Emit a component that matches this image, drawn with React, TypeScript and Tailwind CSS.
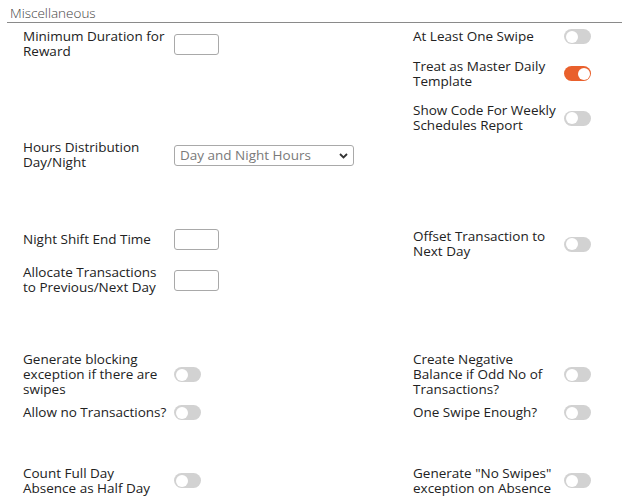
import React from "react";

const FONT = { fontFamily: '"Open Sans", "Liberation Sans", sans-serif' };

function Label({ lines }: { lines: string[] }) {
  return (
    <div className="w-[151px] shrink-0 leading-[15px]">
      {lines.map((l, i) => (
        <div key={i} className="whitespace-nowrap">
          {l}
        </div>
      ))}
    </div>
  );
}

function Toggle({ on = false }: { on?: boolean }) {
  return (
    <div
      className={`relative w-[27px] h-[15px] rounded-full shrink-0 ${
        on ? "bg-[#e9602c]" : "bg-[#d2d2d2]"
      }`}
    >
      <div
        className={`absolute top-[1.5px] w-[12px] h-[12px] rounded-full bg-white ${
          on ? "right-[1.5px]" : "left-[1.5px]"
        }`}
      />
    </div>
  );
}

function TextBox() {
  return (
    <input
      type="text"
      className="w-[45px] h-[21px] border border-[#a9a9a9] rounded-[3px] bg-white outline-none"
    />
  );
}

function Row({
  lines,
  children,
  className = "",
}: {
  lines: string[];
  children: React.ReactNode;
  className?: string;
}) {
  return (
    <div className={`flex items-center ${className}`}>
      <Label lines={lines} />
      {children}
    </div>
  );
}

export default function App() {
  return (
    <div
      className="w-[622px] h-[502px] bg-white overflow-hidden text-[13.5px] text-[#222]"
      style={FONT}
    >
      <div className="ml-[7px] h-[23px] border-b border-[#8a8a8a] pl-[3px] pt-[6px] leading-[15px] font-light text-[#444]">
        Miscellaneous
      </div>

      <div className="pl-[23px] font-medium">
        {/* Section 1 */}
        <div className="grid grid-cols-[390px_1fr] mt-[6px]">
          <div className="flex flex-col">
            <Row lines={["Minimum Duration for", "Reward"]}>
              <TextBox />
            </Row>
          </div>
          <div className="flex flex-col">
            <Row lines={["At Least One Swipe"]}>
              <Toggle />
            </Row>
            <Row lines={["Treat as Master Daily", "Template"]} className="mt-[14.5px]">
              <Toggle on />
            </Row>
            <Row lines={["Show Code For Weekly", "Schedules Report"]} className="mt-[14.5px]">
              <Toggle />
            </Row>
          </div>
        </div>

        {/* Section 2 */}
        <div className="grid grid-cols-[390px_1fr] mt-[7px]">
          <div className="flex flex-col">
            <Row lines={["Hours Distribution", "Day/Night"]}>
              <div className="relative w-[180px] h-[21px]">
                <select
                  defaultValue="dn"
                  className="appearance-none w-full h-full border border-[#a9a9a9] rounded-[3px] bg-white pl-[5px] text-[13.5px] font-normal text-[#7a7a7a] leading-[19px] outline-none"
                >
                  <option value="dn">Day and Night Hours</option>
                  <option value="d">Day Hours</option>
                  <option value="n">Night Hours</option>
                </select>
                <svg
                  className="absolute right-[6px] top-[8px] pointer-events-none"
                  width="9"
                  height="6"
                  viewBox="0 0 9 6"
                >
                  <path d="M1 1 L4.5 4.5 L8 1" fill="none" stroke="#333" strokeWidth="1.8" />
                </svg>
              </div>
            </Row>
          </div>
          <div />
        </div>

        {/* Section 3 */}
        <div className="grid grid-cols-[390px_1fr] mt-[59px]">
          <div className="flex flex-col">
            <Row lines={["Night Shift End Time"]}>
              <TextBox />
            </Row>
            <Row lines={["Allocate Transactions", "to Previous/Next Day"]} className="mt-[15px]">
              <TextBox />
            </Row>
          </div>
          <div className="flex flex-col">
            <Row lines={["Offset Transaction to", "Next Day"]}>
              <Toggle />
            </Row>
          </div>
        </div>

        {/* Section 4 */}
        <div className="grid grid-cols-[390px_1fr] mt-[57px]">
          <div className="flex flex-col">
            <Row lines={["Generate blocking", "exception if there are", "swipes"]}>
              <Toggle />
            </Row>
            <Row lines={["Allow no Transactions?"]} className="mt-[8px]">
              <Toggle />
            </Row>
          </div>
          <div className="flex flex-col">
            <Row lines={["Create Negative", "Balance if Odd No of", "Transactions?"]}>
              <Toggle />
            </Row>
            <Row lines={["One Swipe Enough?"]} className="mt-[8px]">
              <Toggle />
            </Row>
          </div>
        </div>

        {/* Section 5 */}
        <div className="grid grid-cols-[390px_1fr] mt-[45.5px]">
          <div className="flex flex-col">
            <Row lines={["Count Full Day", "Absence as Half Day"]}>
              <Toggle />
            </Row>
          </div>
          <div className="flex flex-col">
            <Row lines={['Generate "No Swipes"', "exception on Absence"]}>
              <Toggle />
            </Row>
          </div>
        </div>
      </div>
    </div>
  );
}
